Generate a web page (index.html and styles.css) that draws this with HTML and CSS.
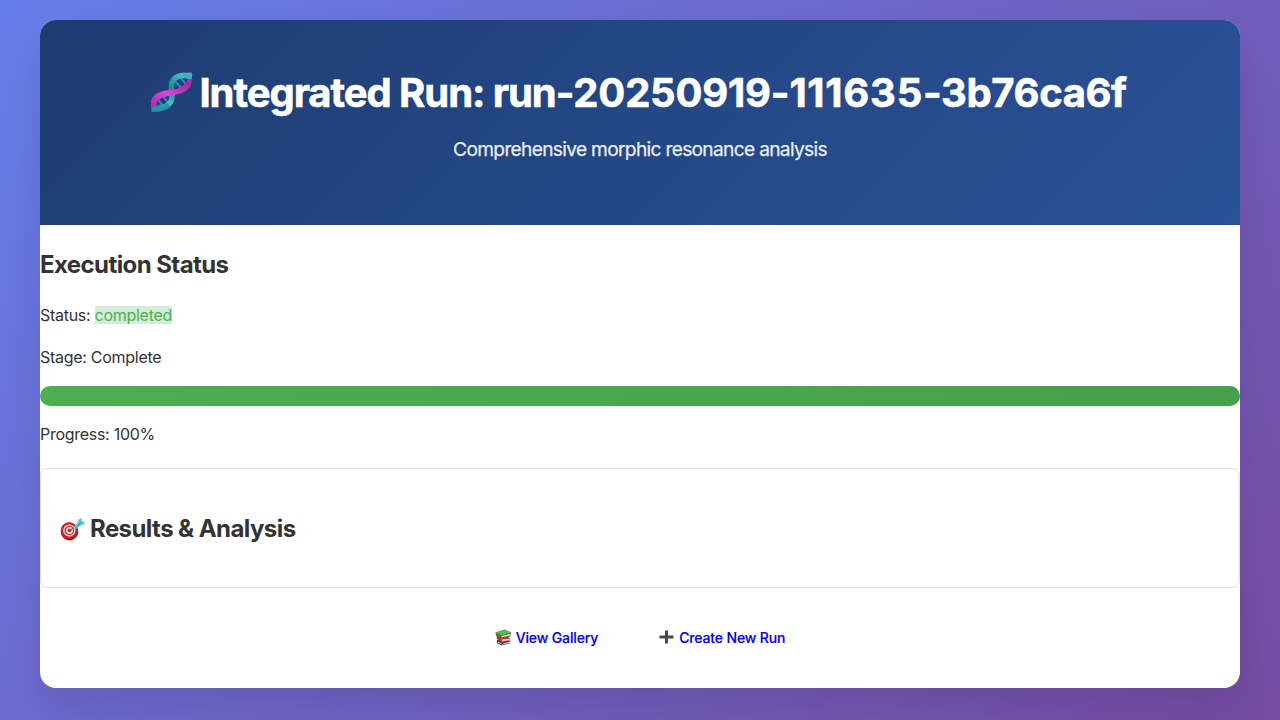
FILE: index.html
```html
<!DOCTYPE html>
<html lang="en">
<head>
<meta charset="utf-8">
<title>Integrated Run</title>
<link rel="stylesheet" href="styles.css">
</head>
<body>
<div class="container">
  <header class="header">
    <h1 class="title">
      <svg class="icon-dna" viewBox="0 0 42 42">
        <defs>
          <linearGradient id="teal" x1="0" y1="1" x2="1" y2="0"><stop offset="0" stop-color="#1a7d8b"/><stop offset=".3" stop-color="#43c5cd"/><stop offset=".55" stop-color="#1d8796"/><stop offset="1" stop-color="#4fd0d6"/></linearGradient>
          <linearGradient id="pink" x1="0" y1="1" x2="1" y2="0"><stop offset="0" stop-color="#a82aa8"/><stop offset=".5" stop-color="#dc48d0"/><stop offset="1" stop-color="#9a28a4"/></linearGradient>
        </defs>
        <path d="M24 10l9 10M29 6l7 9M6 27l8 11M11 24l8 10" stroke="#3a86c4" stroke-width="2"/>
        <path d="M38.500 1C39 9 39 13 34 18" fill="none" stroke="#b02cb6" stroke-width="4.500"/>
        <path d="M40.500 5.500C25 2 19 9 20.500 19C23 31 19 37 1 37.500" fill="none" stroke="url(#teal)" stroke-width="5.500"/>
        <path d="M3.500 40C-1 26 9 23 20 21.500C30 21 35 18 38 12" fill="none" stroke="url(#pink)" stroke-width="6"/>
        <path d="M1 38C8 39 14 37 18 34" fill="none" stroke="#1f9aa5" stroke-width="5"/>
        <path d="M32 4L41 5.500" stroke="#35b5bf" stroke-width="5"/>
      </svg>
      <span class="title-text">Integrated Run: run-<span class="run-date">20250919-</span><span class="run-time">111635</span><span class="run-hash">-3b76ca6f</span></span>
    </h1>
    <p class="subtitle"><span>Comprehensive morphic resonance analysis</span></p>
  </header>

  <section class="execution">
    <h2 class="heading"><span class="heading-text">Execution Status</span></h2>
    <p class="line">Status: <span class="status">completed</span></p>
    <p class="line">Stage: Complete</p>
    <div class="progress"><div class="progress-fill" style="width: 100%"></div></div>
    <p class="line">Progress: 100%</p>
  </section>

  <section class="results">
    <h2 class="heading">
      <svg class="icon-target" viewBox="0 0 25 25">
        <ellipse cx="9.500" cy="14.500" rx="8.800" ry="9" fill="#a51219"/>
        <circle cx="9" cy="13.500" r="8.300" fill="#d5202a"/>
        <circle cx="9.300" cy="13.500" r="6" fill="#fff"/>
        <circle cx="9.300" cy="13.500" r="4.900" fill="#cf2730"/>
        <circle cx="9.500" cy="13.500" r="3.400" fill="#fff"/>
        <circle cx="9.500" cy="13.500" r="2" fill="#c8212b"/>
        <path d="M9.500 14L15 9.500" stroke="#8a6a38" stroke-width="1.400"/>
        <path d="M13 10.500L17 6.500L18.500 2.500L22 1L21.500 4.500L25 4.500L24 7.500L20 9L15 12.500Z" fill="#58c9d6"/>
        <path d="M15 11L22 4.500" stroke="#2e97ab" stroke-width="1"/>
      </svg>
      <span class="heading-text">Results &amp; Analysis</span>
    </h2>
  </section>

  <nav class="actions">
    <a class="action" href="#">
      <svg class="icon-link" viewBox="0 0 17 17">
        <path d="M2 11L9 9.500L15.500 12.500L15 14.500L6.500 16.500L2 14Z" fill="#3b4147"/>
        <path d="M3 12.500L7 15L15 12.500V14L7 15.500L3 13.500Z" fill="#e8e5dc"/>
        <path d="M1.500 7L9 5.500L15 9L14.500 12L6.500 13.500L2 10Z" fill="#c9251f"/>
        <path d="M6.500 10.500L14.500 9.500V11L7 12.500Z" fill="#f0ded7"/>
        <path d="M.500 3.500L9.500 .5L16 3.500L15.500 7.500L6 9.500L1 6.500Z" fill="#387b30"/>
        <path d="M.500 3.500L9.500 .5L16 3.500L6.500 6.500Z" fill="#65b353"/>
        <path d="M6.500 7L15.500 4.800V6.500L6.500 8.500Z" fill="#dbe5d3"/>
      </svg>
      <span class="link-text">View Gallery</span>
    </a>
    <a class="action" href="#">
      <svg class="icon-link" viewBox="0 0 17 17"><path d="M8.500 1.500V14.500M1.500 8H15.500" stroke="#484848" stroke-width="3"/></svg>
      <span class="link-text">Create New Run</span>
    </a>
  </nav>
</div>
</body>
</html>
```
FILE: styles.css
```css
* { box-sizing: border-box; }
body {
  margin: 0;
  padding: 20px;
  min-height: 100vh;
  font-family: Inter, "Liberation Sans", sans-serif;
  font-size: 16px;
  line-height: 1.6;
  color: #333;
  background: linear-gradient(135deg, #667eea 0%, #764ba2 100%);
}
.container {
  max-width: 1200px;
  height: 668px;
  margin: 0 auto;
  background: #fff;
  border-radius: 16px;
  overflow: hidden;
  box-shadow: 0 20px 40px rgba(0, 0, 0, 0.1);
}
.header {
  height: 204.9px;
  padding: 40px;
  text-align: center;
  color: #fff;
  background: linear-gradient(135deg, #1e3c72 0%, #2a5298 100%);
}
.title {
  display: flex;
  justify-content: center;
  align-items: center;
  gap: 6px;
  margin: 0 0 10px -2px;
  padding-top: 2px;
  height: 64px;
  font-size: 40px;
  font-weight: 700;
  white-space: nowrap;
  -webkit-text-stroke: 0.6px #fff;
}
.title-text { letter-spacing: -1.05px; }
.run-date { letter-spacing: -0.2px; }
.run-time { letter-spacing: 0.75px; }
.run-hash { letter-spacing: -0.4px; }
.icon-dna { width: 42px; height: 42px; margin-bottom: 2px; }
.subtitle {
  margin: 0;
  font-size: 19.2px;
  opacity: 0.9;
  letter-spacing: -0.7px;
  -webkit-text-stroke: 0.25px #fff;
}
.heading {
  display: flex;
  align-items: center;
  gap: 4px;
  height: 38.4px;
  margin: 19.92px 0;
  font-size: 24px;
  line-height: 38.4px;
  font-weight: 700;
}
.heading-text { padding-top: 2.4px; letter-spacing: -0.58px; }
.icon-target { width: 25px; height: 25px; margin: 3px 0 0 -1px; }
.results .heading { gap: 5px; }
.execution { display: flow-root; }
.line { margin: 16px 0; letter-spacing: -0.28px; }
.status {
  display: inline-block;
  line-height: 18px;
  color: #4caf50;
  background: #d4edda;
}
.progress { height: 20px; border-radius: 10px; overflow: hidden; background: #e0e0e0; }
.progress-fill { height: 100%; background: linear-gradient(135deg, #4caf50, #45a049); }
.results {
  margin-top: 4px;
  padding: 20px;
  border: 1px solid #ddd;
  border-radius: 8px;
}
.actions {
  display: flex;
  justify-content: center;
  gap: 60px;
  padding-top: 39px;
}
.action {
  display: flex;
  align-items: center;
  gap: 4px;
  font-size: 14px;
  font-weight: 500;
  color: #0000ee;
  text-decoration: none;
}
.icon-link { width: 17px; height: 17px; margin-bottom: 2px; }
.link-text { letter-spacing: -0.14px; -webkit-text-stroke: 0.15px #0000ee; }
```
